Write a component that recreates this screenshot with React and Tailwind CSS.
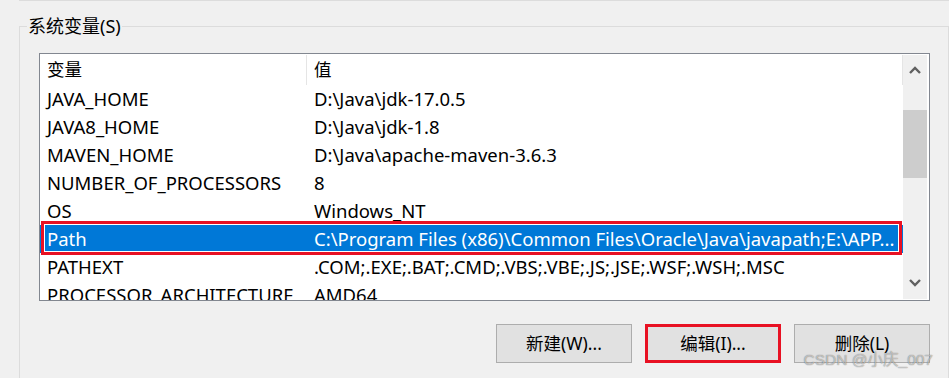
import React from "react";

const rows = [
  ["JAVA_HOME", "D:\\Java\\jdk-17.0.5"],
  ["JAVA8_HOME", "D:\\Java\\jdk-1.8"],
  ["MAVEN_HOME", "D:\\Java\\apache-maven-3.6.3"],
  ["NUMBER_OF_PROCESSORS", "8"],
  ["OS", "Windows_NT"],
  ["Path", "C:\\Program Files (x86)\\Common Files\\Oracle\\Java\\javapath;E:\\APP..."],
  ["PATHEXT", ".COM;.EXE;.BAT;.CMD;.VBS;.VBE;.JS;.JSE;.WSF;.WSH;.MSC"],
  ["PROCESSOR_ARCHITECTURE", "AMD64"],
];

function Chevron({ up }) {
  return (
    <svg width="12" height="8" viewBox="0 0 12 8">
      <polyline
        points={up ? "1,7 6,2 11,7" : "1,1 6,6 11,1"}
        fill="none"
        stroke="#606060"
        strokeWidth="2.4"
      />
    </svg>
  );
}

export default function App() {
  return (
    <div className="w-[949px] h-[378px] bg-[#f0f0f0] overflow-hidden relative font-['Noto_Sans','Noto_Sans_CJK_SC',sans-serif] text-black">
      <div className="ml-[19px] h-[1px] bg-[#dcdcdc]" />
      <div className="relative ml-[19px] mt-[25px] w-[930px] h-[400px] border border-[#dcdcdc] pt-[26px] pl-[19px]">
        <span className="absolute left-[7px] top-[-12px] bg-[#f0f0f0] px-[1px] text-[18px] leading-[22px]">
          系统变量(S)
        </span>
        <div className="w-[891px] h-[248px] border border-[#828790] bg-white flex overflow-hidden">
          <div className="w-[863px] flex flex-col overflow-hidden">
            <div className="h-[31px] flex shrink-0 text-[17.5px]">
              <div className="w-[266px] pl-[7px] leading-[31px]">变量</div>
              <div className="w-[1px] h-[30px] mt-[1px] bg-[#e5e5e5]" />
              <div className="w-[595px] pl-[7px] leading-[31px]">值</div>
              <div className="w-[1px] h-[30px] mt-[1px] bg-[#e5e5e5]" />
            </div>
            {rows.map(([k, v]) => {
              const sel = k === "Path";
              return (
                <div
                  key={k}
                  className={
                    "relative h-[28px] shrink-0 flex text-[18.5px] leading-[28px] whitespace-nowrap " +
                    (sel ? "bg-[#0078d7] text-white" : "")
                  }
                >
                  <div className="w-[267px] pl-[7px]">{k}</div>
                  <div className="w-[596px] pl-[7px] overflow-hidden">{v}</div>
                  {sel && (
                    <div className="absolute left-[1px] right-[1px] top-[-4px] bottom-[-2px] border-[3px] border-[#e81123] shadow-[inset_0_0_0_1px_#ffffff]" />
                  )}
                </div>
              );
            })}
          </div>
          <div className="w-[24px] my-[1px] bg-[#f0f0f0] flex flex-col">
            <div className="h-[30px] flex items-center justify-center">
              <Chevron up />
            </div>
            <div className="flex-1">
              <div className="mt-[25px] h-[68px] bg-[#cdcdcd]" />
            </div>
            <div className="h-[22px] flex items-start justify-center pt-[2px]">
              <Chevron />
            </div>
          </div>
        </div>
        <div className="mt-[23px] w-[891px] flex justify-end gap-[13px] text-[17.5px]">
          <button className="w-[136px] h-[39px] bg-[#e1e1e1] border border-[#adadad]">新建(W)...</button>
          <button className="relative w-[136px] h-[39px] bg-[#e1e1e1] border border-[#adadad]">
            编辑(I)...
            <span className="absolute inset-[-1px] border-[3px] border-[#e81123]" />
          </button>
          <button className="w-[136px] h-[39px] bg-[#e1e1e1] border border-[#adadad]">删除(L)</button>
        </div>
      </div>
      <div className="absolute right-[16px] top-[349px] text-[15.5px] leading-[22px] font-['Liberation_Sans','Noto_Sans_CJK_SC',sans-serif] text-[rgba(255,255,255,0.55)] [text-shadow:0_0_1px_rgba(0,0,0,0.6)]">
        CSDN @小庆_007
      </div>
    </div>
  );
}
